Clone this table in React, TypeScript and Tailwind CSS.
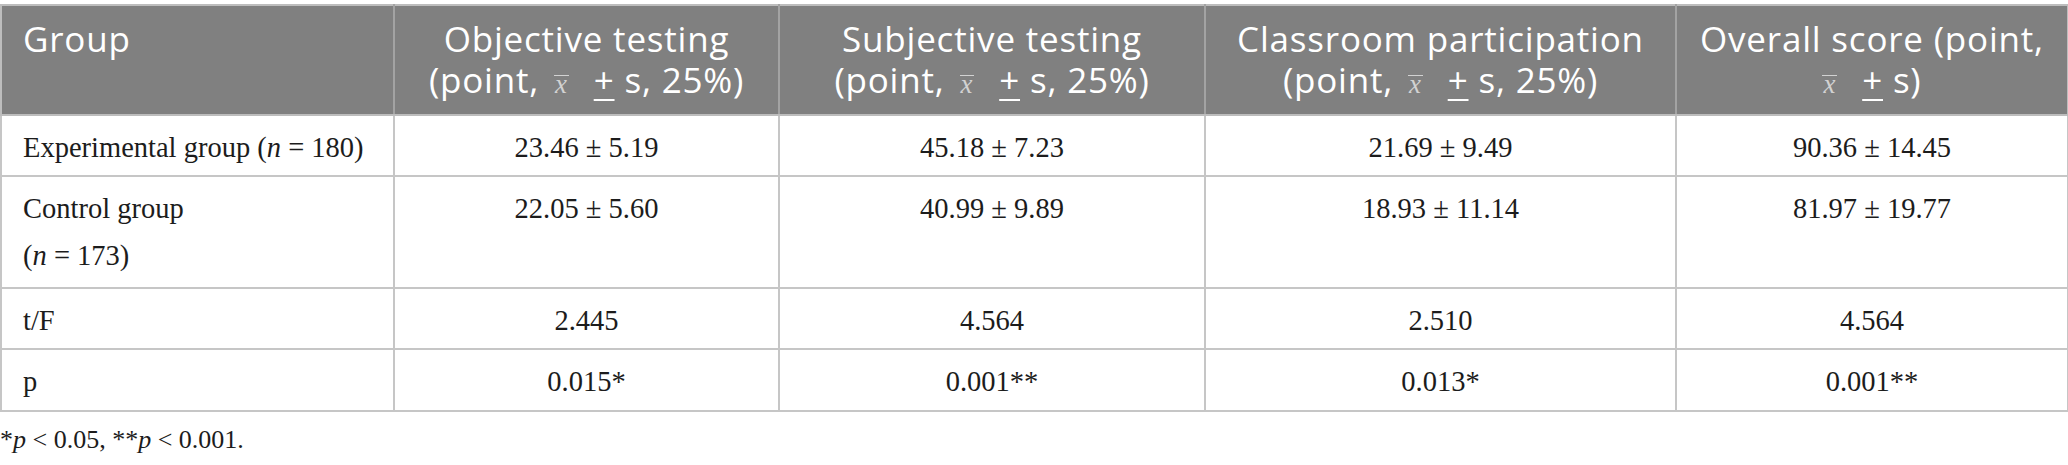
import type { ReactNode } from "react";

const serif = "font-['Liberation_Serif','Times_New_Roman',serif]";
const sans = "font-['Open_Sans','Noto_Sans',sans-serif]";

function XBar({ className = "" }: { className?: string }) {
  return (
    <span
      className={`inline-block ${serif} italic text-[27px] leading-[16px] px-[1px] text-[#d2d2d2] border-t border-[#d2d2d2] ${className}`}
    >
      x
    </span>
  );
}

function Pm() {
  return <span className="underline decoration-2 underline-offset-[6px]">+</span>;
}

const Stat = ({ tail }: { tail: string }) => (
  <>
    (point, <XBar className="ml-[5px] mr-[15px]" /> <Pm /> s{tail}
  </>
);

const columns = ["w-[393px]", "w-[385px]", "w-[426px]", "w-[471px]", "w-[392px]"];

const headers: ReactNode[] = [
  <>Objective testing<br /><Stat tail=", 25%)" /></>,
  <>Subjective testing<br /><Stat tail=", 25%)" /></>,
  <>Classroom participation<br /><Stat tail=", 25%)" /></>,
  <>Overall score (point,<br /><XBar className="mr-[15px]" /> <Pm /> s)</>,
];

const rows: { label: ReactNode; values: string[]; height: string }[] = [
  {
    label: <>Experimental group (<i>n</i> = 180)</>,
    values: ["23.46 ± 5.19", "45.18 ± 7.23", "21.69 ± 9.49", "90.36 ± 14.45"],
    height: "h-[61px]",
  },
  {
    label: <>Control group<br />(<i>n</i> = 173)</>,
    values: ["22.05 ± 5.60", "40.99 ± 9.89", "18.93 ± 11.14", "81.97 ± 19.77"],
    height: "h-[112px]",
  },
  {
    label: "t/F",
    values: ["2.445", "4.564", "2.510", "4.564"],
    height: "h-[61px]",
  },
  {
    label: "p",
    values: ["0.015*", "0.001**", "0.013*", "0.001**"],
    height: "h-[62px]",
  },
];

export default function App() {
  return (
    <div className="w-[2068px] h-[465px] bg-white pt-[4px] overflow-hidden">
      <table className="table-fixed border-collapse w-[2067px]">
        <colgroup>
          {columns.map((w, i) => (
            <col key={i} className={w} />
          ))}
        </colgroup>
        <thead>
          <tr className={`h-[110px] bg-[#808080] text-white ${sans} text-[35px] leading-[41px] tracking-[0.8px]`}>
            <th className="border-2 border-[#bdbdbd] border-r-[#a3a3a3] align-top text-left font-normal pt-[12px] pl-[21px]">
              Group
            </th>
            {headers.map((h, i) => (
              <th
                key={i}
                className="border-2 border-[#bdbdbd] border-x-[#a3a3a3] last:border-r-[#bdbdbd] align-top text-center font-normal pt-[12px] px-[6px] whitespace-nowrap"
              >
                {h}
              </th>
            ))}
          </tr>
        </thead>
        <tbody className={`${serif} text-[28.5px] leading-[47px] text-[#1c1c1c]`}>
          {rows.map((row, r) => (
            <tr key={r} className={row.height}>
              <td className="border-2 border-[#c6c6c6] align-top pt-[8px] pl-[21px] whitespace-nowrap">
                {row.label}
              </td>
              {row.values.map((v, i) => (
                <td key={i} className="border-2 border-[#c6c6c6] align-top pt-[8px] text-center whitespace-nowrap">
                  {v}
                </td>
              ))}
            </tr>
          ))}
        </tbody>
      </table>
      <p className={`${serif} text-[26px] leading-[47px] text-[#1c1c1c] pt-[4px]`}>
        *<i>p</i> &lt; 0.05, **<i>p</i> &lt; 0.001.
      </p>
    </div>
  );
}
